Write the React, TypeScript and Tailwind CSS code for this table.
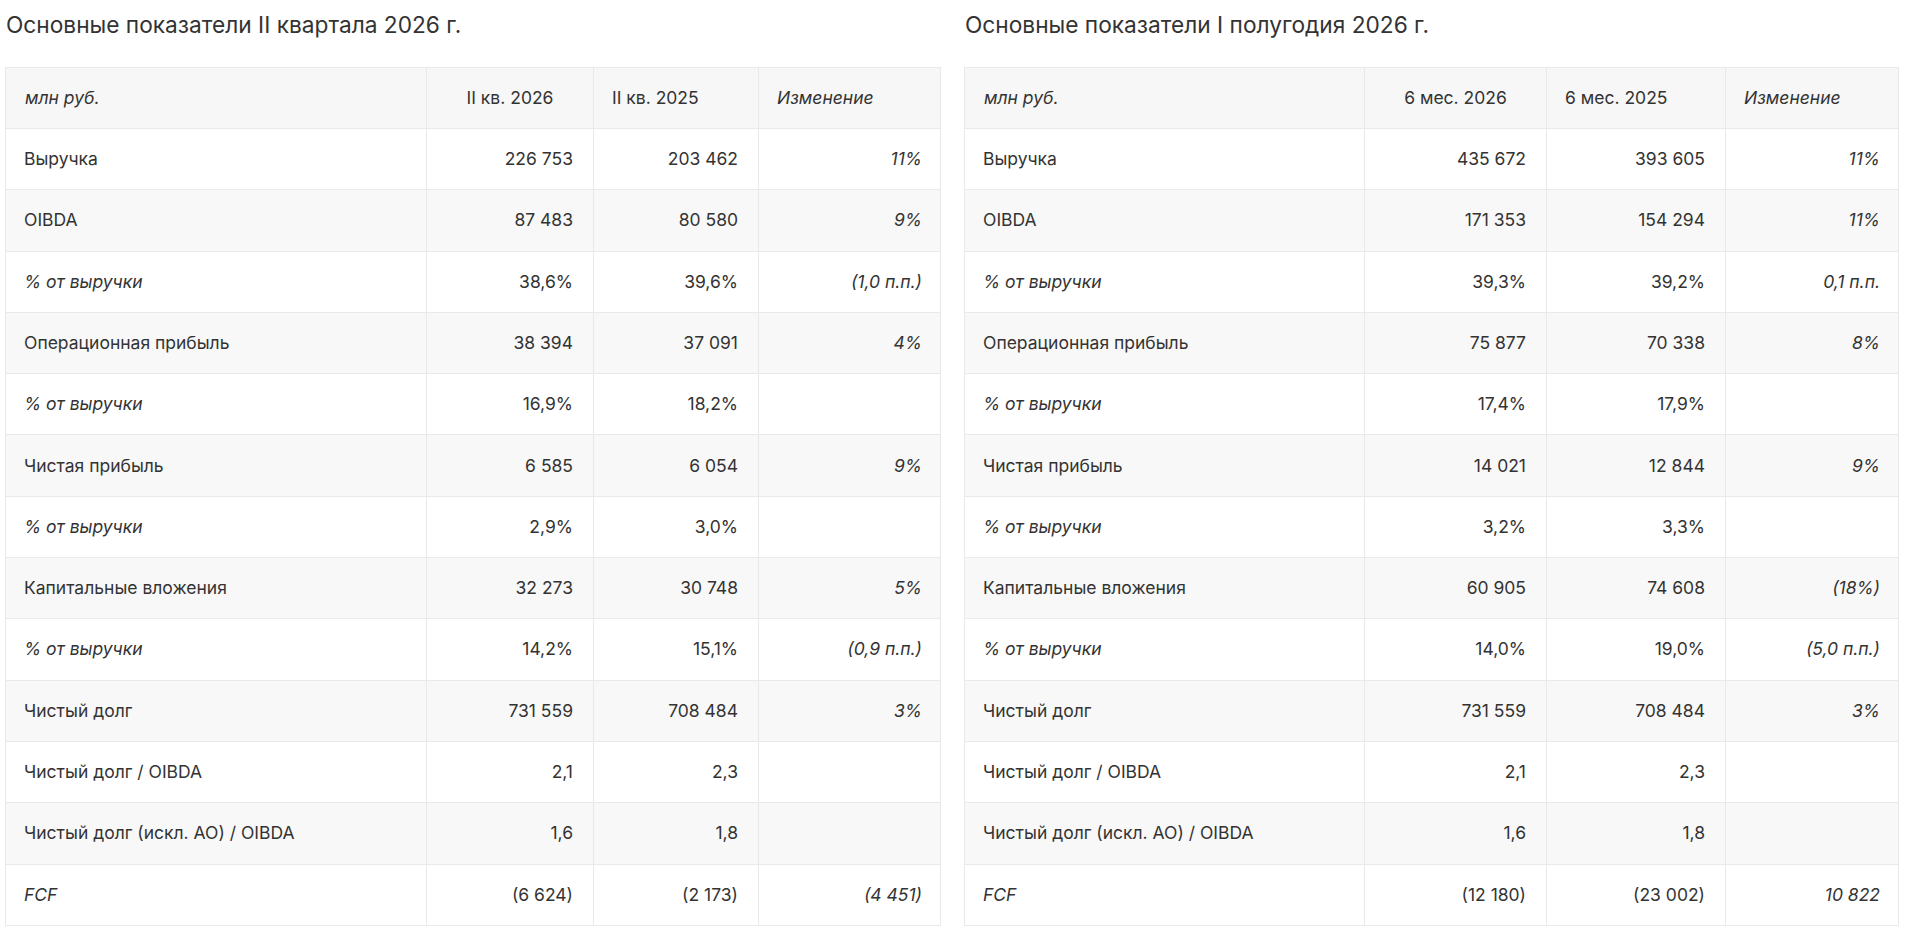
import React from "react";

type Row = { label: string; a: string; b: string; c: string; italic?: boolean };

const q2: Row[] = [
  { label: "Выручка", a: "226 753", b: "203 462", c: "11%" },
  { label: "OIBDA", a: "87 483", b: "80 580", c: "9%" },
  { label: "% от выручки", a: "38,6%", b: "39,6%", c: "(1,0 п.п.)", italic: true },
  { label: "Операционная прибыль", a: "38 394", b: "37 091", c: "4%" },
  { label: "% от выручки", a: "16,9%", b: "18,2%", c: "", italic: true },
  { label: "Чистая прибыль", a: "6 585", b: "6 054", c: "9%" },
  { label: "% от выручки", a: "2,9%", b: "3,0%", c: "", italic: true },
  { label: "Капитальные вложения", a: "32 273", b: "30 748", c: "5%" },
  { label: "% от выручки", a: "14,2%", b: "15,1%", c: "(0,9 п.п.)", italic: true },
  { label: "Чистый долг", a: "731 559", b: "708 484", c: "3%" },
  { label: "Чистый долг / OIBDA", a: "2,1", b: "2,3", c: "" },
  { label: "Чистый долг (искл. АО) / OIBDA", a: "1,6", b: "1,8", c: "" },
  { label: "FCF", a: "(6 624)", b: "(2 173)", c: "(4 451)", italic: true },
];

const h1: Row[] = [
  { label: "Выручка", a: "435 672", b: "393 605", c: "11%" },
  { label: "OIBDA", a: "171 353", b: "154 294", c: "11%" },
  { label: "% от выручки", a: "39,3%", b: "39,2%", c: "0,1 п.п.", italic: true },
  { label: "Операционная прибыль", a: "75 877", b: "70 338", c: "8%" },
  { label: "% от выручки", a: "17,4%", b: "17,9%", c: "", italic: true },
  { label: "Чистая прибыль", a: "14 021", b: "12 844", c: "9%" },
  { label: "% от выручки", a: "3,2%", b: "3,3%", c: "", italic: true },
  { label: "Капитальные вложения", a: "60 905", b: "74 608", c: "(18%)" },
  { label: "% от выручки", a: "14,0%", b: "19,0%", c: "(5,0 п.п.)", italic: true },
  { label: "Чистый долг", a: "731 559", b: "708 484", c: "3%" },
  { label: "Чистый долг / OIBDA", a: "2,1", b: "2,3", c: "" },
  { label: "Чистый долг (искл. АО) / OIBDA", a: "1,6", b: "1,8", c: "" },
  { label: "FCF", a: "(12 180)", b: "(23 002)", c: "10 822", italic: true },
];

function DataTable({
  title,
  h1: ha,
  h2: hb,
  rows,
  widths,
  tableW,
}: {
  title: string;
  h1: string;
  h2: string;
  rows: Row[];
  widths: string[];
  tableW: string;
}) {
  return (
    <div className="flex flex-col">
      <h2 className="h-[51px] pt-[8px] pl-[1px] text-[22.7px] leading-[34px] text-[#333333] font-normal">
        {title}
      </h2>
      <div className="mt-[16px]">
        <table className={`${tableW} border-collapse table-fixed border border-[#e9e9e9]`}>
          <colgroup>
            <col className={widths[0]} />
            <col className={widths[1]} />
            <col className={widths[2]} />
            <col className={widths[3]} />
          </colgroup>
          <thead>
            <tr className="h-[61px] bg-[#f7f7f7]">
              <th className="border border-[#e9e9e9] pl-[19px] text-left font-normal italic">млн руб.</th>
              <th className="border border-[#e9e9e9] text-center font-normal">{ha}</th>
              <th className="border border-[#e9e9e9] pl-[18px] text-left font-normal">{hb}</th>
              <th className="border border-[#e9e9e9] pl-[18px] text-left font-normal italic">Изменение</th>
            </tr>
          </thead>
          <tbody>
            {rows.map((r, i) => (
              <tr key={i} className={`h-[61.3px] ${i % 2 === 1 ? "bg-[#f8f8f8]" : "bg-white"}`}>
                <td className={`border border-[#e9e9e9] pl-[18px] text-left ${r.italic ? "italic" : ""}`}>{r.label}</td>
                <td className="border border-[#e9e9e9] pr-[20px] text-right">{r.a}</td>
                <td className="border border-[#e9e9e9] pr-[20px] text-right">{r.b}</td>
                <td className="border border-[#e9e9e9] pr-[18px] text-right italic">{r.c}</td>
              </tr>
            ))}
          </tbody>
        </table>
      </div>
    </div>
  );
}

export default function App() {
  return (
    <div
      className="w-[1920px] h-[939px] bg-white text-[#333333] text-[17.5px] pl-[5px] flex gap-[23px]"
      style={{ fontFamily: "Inter, 'Noto Sans', sans-serif" }}
    >
      <DataTable
        title="Основные показатели II квартала 2026 г."
        h1="II кв. 2026"
        h2="II кв. 2025"
        rows={q2}
        widths={["w-[421px]", "w-[167px]", "w-[165px]", "w-[182px]"]}
        tableW="w-[935px]"
      />
      <DataTable
        title="Основные показатели I полугодия 2026 г."
        h1="6 мес. 2026"
        h2="6 мес. 2025"
        rows={h1}
        widths={["w-[400px]", "w-[182px]", "w-[179px]", "w-[173px]"]}
        tableW="w-[934px]"
      />
    </div>
  );
}
